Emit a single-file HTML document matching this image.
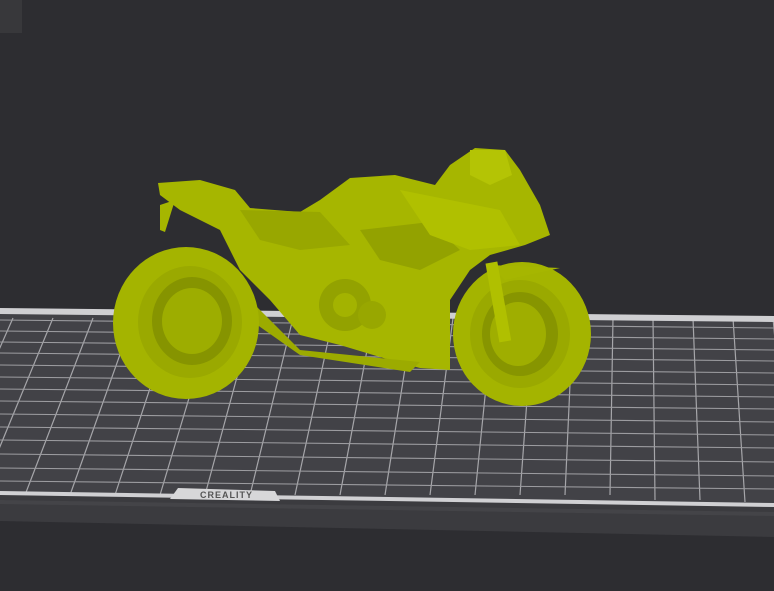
<!DOCTYPE html>
<html><head><style>
html,body{margin:0;padding:0;background:#2d2d31;width:774px;height:591px;overflow:hidden}
svg{display:block}
</style></head><body>
<svg width="774" height="591" viewBox="0 0 774 591" xmlns="http://www.w3.org/2000/svg">
<rect width="774" height="591" fill="#2d2d31"/>
<rect x="0" y="0" width="22" height="33" fill="#38383b"/>
<polygon points="0,494 774,506 774,537 0,521" fill="#3b3b3f"/>
<polygon points="0,500 774,512 774,516 0,504" fill="#444448"/>
<polygon points="0,310 774,318 774,506 0,494" fill="#424247"/>
<g stroke="#a6a6aa" stroke-width="1.2">
<line x1="-27" y1="318" x2="-110" y2="495"/>
<line x1="13" y1="318" x2="-65" y2="495"/>
<line x1="53" y1="318" x2="-20" y2="495"/>
<line x1="93" y1="318" x2="25" y2="495"/>
<line x1="133" y1="318" x2="70" y2="495"/>
<line x1="173" y1="318" x2="115" y2="495"/>
<line x1="213" y1="318" x2="160" y2="495"/>
<line x1="253" y1="318" x2="205" y2="495"/>
<line x1="293" y1="318" x2="250" y2="495"/>
<line x1="333" y1="318" x2="295" y2="495"/>
<line x1="373" y1="318" x2="340" y2="495"/>
<line x1="413" y1="318" x2="385" y2="495"/>
<line x1="453" y1="318" x2="430" y2="495"/>
<line x1="493" y1="318" x2="475" y2="495"/>
<line x1="533" y1="318" x2="520" y2="495"/>
<line x1="573" y1="318" x2="565" y2="495"/>
<line x1="613" y1="318" x2="610" y2="495"/>
<line x1="653" y1="318" x2="655" y2="500"/>
<line x1="693" y1="318" x2="700" y2="500"/>
<line x1="733" y1="318" x2="745" y2="502"/>
<line x1="773" y1="318" x2="790" y2="502"/>
</g>
<g stroke="#9c9ca0" stroke-width="1.1">
<line x1="0" y1="320" x2="774" y2="328"/>
<line x1="0" y1="331" x2="774" y2="339"/>
<line x1="0" y1="342" x2="774" y2="350"/>
<line x1="0" y1="353" x2="774" y2="361"/>
<line x1="0" y1="365" x2="774" y2="373"/>
<line x1="0" y1="377" x2="774" y2="385"/>
<line x1="0" y1="389" x2="774" y2="397"/>
<line x1="0" y1="401" x2="774" y2="409"/>
<line x1="0" y1="414" x2="774" y2="422"/>
<line x1="0" y1="427" x2="774" y2="435"/>
<line x1="0" y1="440" x2="774" y2="448"/>
<line x1="0" y1="454" x2="774" y2="462"/>
<line x1="0" y1="468" x2="774" y2="476"/>
<line x1="0" y1="481" x2="774" y2="489"/>
</g>
<polygon points="0,308 774,316 774,322 0,314" fill="#cfcfd2"/>
<polygon points="0,491 774,503 774,507 0,495" fill="#d0d0d3"/>
<polygon points="178,488 275,491 280,501 170,499" fill="#d7d7d9"/>
<text x="200" y="498" font-family="Liberation Sans, sans-serif" font-weight="bold" font-size="9" fill="#555" letter-spacing="1">CREALITY</text>
<g>
<polygon points="158,183 200,180 235,190 250,208 300,212 320,200 350,178 395,175 435,185 450,165 475,148 505,150 520,170 540,205 550,235 525,245 490,255 470,270 450,300 450,370 420,368 390,360 340,345 300,335 270,300 240,270 220,230 180,210 160,195" fill="#a6b600"/>
<polygon points="240,210 320,212 350,245 300,250 260,240" fill="#98a700"/>
<polygon points="360,230 430,222 460,250 420,270 380,260" fill="#93a200"/>
<polygon points="400,190 500,210 520,245 470,250 430,235" fill="#b0c000"/>
<polygon points="470,150 505,150 512,175 490,185 470,175" fill="#b4c405"/>
<polygon points="230,280 300,350 420,362 410,372 300,355 222,300" fill="#9cab00"/>
<circle cx="345" cy="305" r="26" fill="#93a200"/>
<circle cx="345" cy="305" r="12" fill="#a3b300"/>
<circle cx="372" cy="315" r="14" fill="#98a700"/>
<ellipse cx="186" cy="323" rx="73" ry="76" fill="#a4b400"/>
<ellipse cx="190" cy="322" rx="52" ry="56" fill="#9aa900"/>
<ellipse cx="192" cy="321" rx="40" ry="44" fill="#869400"/>
<ellipse cx="192" cy="321" rx="30" ry="33" fill="#9dad00"/>
<ellipse cx="522" cy="334" rx="69" ry="72" fill="#a4b400"/>
<ellipse cx="520" cy="334" rx="50" ry="54" fill="#9aa900"/>
<ellipse cx="520" cy="334" rx="38" ry="42" fill="#879500"/>
<ellipse cx="518" cy="334" rx="28" ry="32" fill="#9fae00"/>
<polygon points="490,265 560,268 505,280" fill="#a6b600"/>
<rect x="492" y="262" width="12" height="80" fill="#b0c000" transform="rotate(-10 498 300)"/>
<polygon points="160,205 175,200 165,232 160,230" fill="#a6b600"/>
</g>
</svg>
</body></html>
